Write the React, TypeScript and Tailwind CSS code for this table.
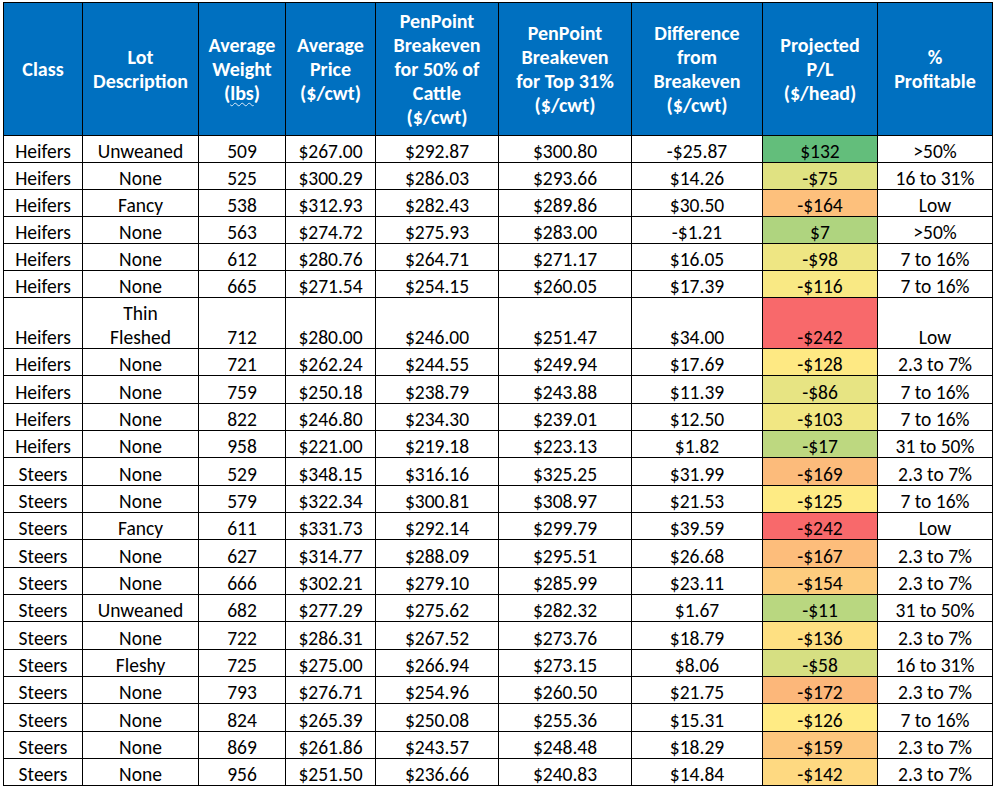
import React from "react";

type Row = [string, string, string, string, string, string, string, string, string, string];

const rows: Row[] = [
  ["Heifers", "Unweaned", "509", "$267.00", "$292.87", "$300.80", "-$25.87", "$132", ">50%", "bg-[#63BE7B]"],
  ["Heifers", "None", "525", "$300.29", "$286.03", "$293.66", "$14.26", "-$75", "16 to 31%", "bg-[#E0E282]"],
  ["Heifers", "Fancy", "538", "$312.93", "$282.43", "$289.86", "$30.50", "-$164", "Low", "bg-[#FDC07C]"],
  ["Heifers", "None", "563", "$274.72", "$275.93", "$283.00", "-$1.21", "$7", ">50%", "bg-[#AFD47F]"],
  ["Heifers", "None", "612", "$280.76", "$264.71", "$271.17", "$16.05", "-$98", "7 to 16%", "bg-[#EEE683]"],
  ["Heifers", "None", "665", "$271.54", "$254.15", "$260.05", "$17.39", "-$116", "7 to 16%", "bg-[#F9E984]"],
  ["Heifers", "Thin Fleshed", "712", "$280.00", "$246.00", "$251.47", "$34.00", "-$242", "Low", "bg-[#F8696B]"],
  ["Heifers", "None", "721", "$262.24", "$244.55", "$249.94", "$17.69", "-$128", "2.3 to 7%", "bg-[#FEE983]"],
  ["Heifers", "None", "759", "$250.18", "$238.79", "$243.88", "$11.39", "-$86", "7 to 16%", "bg-[#E7E483]"],
  ["Heifers", "None", "822", "$246.80", "$234.30", "$239.01", "$12.50", "-$103", "7 to 16%", "bg-[#F1E783]"],
  ["Heifers", "None", "958", "$221.00", "$219.18", "$223.13", "$1.82", "-$17", "31 to 50%", "bg-[#BDD880]"],
  ["Steers", "None", "529", "$348.15", "$316.16", "$325.25", "$31.99", "-$169", "2.3 to 7%", "bg-[#FCBB7B]"],
  ["Steers", "None", "579", "$322.34", "$300.81", "$308.97", "$21.53", "-$125", "7 to 16%", "bg-[#FEEB84]"],
  ["Steers", "Fancy", "611", "$331.73", "$292.14", "$299.79", "$39.59", "-$242", "Low", "bg-[#F8696B]"],
  ["Steers", "None", "627", "$314.77", "$288.09", "$295.51", "$26.68", "-$167", "2.3 to 7%", "bg-[#FDBD7B]"],
  ["Steers", "None", "666", "$302.21", "$279.10", "$285.99", "$23.11", "-$154", "2.3 to 7%", "bg-[#FDCC7E]"],
  ["Steers", "Unweaned", "682", "$277.29", "$275.62", "$282.32", "$1.67", "-$11", "31 to 50%", "bg-[#B9D780]"],
  ["Steers", "None", "722", "$286.31", "$267.52", "$273.76", "$18.79", "-$136", "2.3 to 7%", "bg-[#FEE082]"],
  ["Steers", "Fleshy", "725", "$275.00", "$266.94", "$273.15", "$8.06", "-$58", "16 to 31%", "bg-[#D6DF82]"],
  ["Steers", "None", "793", "$276.71", "$254.96", "$260.50", "$21.75", "-$172", "2.3 to 7%", "bg-[#FCB77A]"],
  ["Steers", "None", "824", "$265.39", "$250.08", "$255.36", "$15.31", "-$126", "7 to 16%", "bg-[#FFEB84]"],
  ["Steers", "None", "869", "$261.86", "$243.57", "$248.48", "$18.29", "-$159", "2.3 to 7%", "bg-[#FDC67D]"],
  ["Steers", "None", "956", "$251.50", "$236.66", "$240.83", "$14.84", "-$142", "2.3 to 7%", "bg-[#FED981]"],
];

const widths = [79, 116, 87, 90, 123, 133, 131, 115, 115];

const th = "border border-black px-0 align-middle text-center font-bold text-white text-[20px] leading-[24px]";
const td = "border border-black px-0 align-bottom text-center leading-[20px] pb-[1px]";

export default function App() {
  return (
    <div
      className="bg-white w-[997px] h-[789px] pl-[3px] pt-[2px] text-black text-[19.5px]"
      style={{ fontFamily: "Carlito, Lato, 'Open Sans', sans-serif" }}
    >
      <table className="table-fixed border-collapse w-[990px]">
        <colgroup>
          {widths.map((w, i) => (
            <col key={i} style={{ width: w }} />
          ))}
        </colgroup>
        <thead>
          <tr className="h-[133px] bg-[#0070C0]">
            <th className={th}>Class</th>
            <th className={th}>Lot<br />Description</th>
            <th className={th}>
              Average<br />Weight<br />(<span className="underline decoration-wavy decoration-[#dbe8f8] decoration-1 underline-offset-2">lbs</span>)
            </th>
            <th className={th}>Average<br />Price<br />($/cwt)</th>
            <th className={th}>PenPoint<br />Breakeven<br />for 50% of<br />Cattle<br />($/cwt)</th>
            <th className={th}>PenPoint<br />Breakeven<br />for Top 31%<br />($/cwt)</th>
            <th className={th}>Difference<br />from<br />Breakeven<br />($/cwt)</th>
            <th className={th}>Projected<br />P/L<br />($/head)</th>
            <th className={th}>%<br />Profitable</th>
          </tr>
        </thead>
        <tbody>
          {rows.map((r, i) => {
            const tall = r[1] === "Thin Fleshed";
            const h = tall ? "h-[51px]" : i < 6 ? "h-[27px]" : "h-[27.33px]";
            return (
              <tr key={i} className={h}>
                <td className={td}>{r[0]}</td>
                <td className={td}>
                  {tall ? (
                    <div className="leading-[24px] -mb-[2px]">
                      Thin
                      <br />
                      Fleshed
                    </div>
                  ) : (
                    r[1]
                  )}
                </td>
                <td className={td}>{r[2]}</td>
                <td className={td}>{r[3]}</td>
                <td className={td}>{r[4]}</td>
                <td className={td}>{r[5]}</td>
                <td className={td}>{r[6]}</td>
                <td className={`${td} ${r[9]}`}>{r[7]}</td>
                <td className={td}>{r[8]}</td>
              </tr>
            );
          })}
        </tbody>
      </table>
    </div>
  );
}
